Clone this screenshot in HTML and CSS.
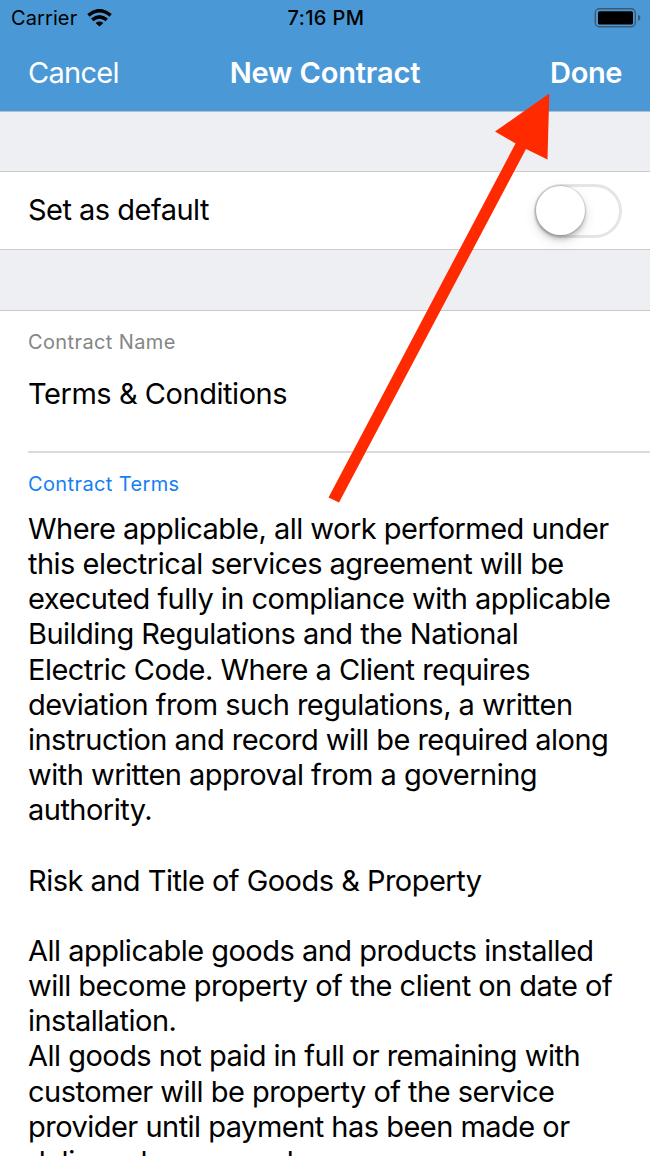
FILE: index.html
```html
<!DOCTYPE html>
<html lang="en">
<head>
    <meta charset="utf-8">
    <title>New Contract</title>
    <link rel="stylesheet" href="styles.css">
</head>
<body>
    <div class="screen">
        <header class="top">
            <div class="status-bar">
                <div class="carrier">
                    <span>Carrier</span>
                    <svg width="25" height="18" viewBox="0 0 25 18" fill="none" stroke="#000" stroke-width="3.6">
                        <path d="M1.4 6.4Q12.5-3 23.6 6.4"/>
                        <path d="M5.2 10.9Q12.5 4.7 19.8 10.9"/>
                        <path d="M8.6 13.9Q12.5 11 16.4 13.9L12.5 17.6Z" fill="#000" stroke="none"/>
                    </svg>
                </div>
                <div class="time">7:16 PM</div>
                <svg class="battery" width="47" height="20" viewBox="0 0 47 20">
                    <rect x="1.3" y="0.8" width="40" height="18" rx="4" fill="none" stroke="#3f5a70" stroke-width="1.4"/>
                    <rect x="4" y="3.2" width="35" height="13.2" rx="1.5" fill="#000"/>
                    <path d="M44 6.5Q46.5 8 46.5 9.8Q46.5 11.6 44 13Z" fill="#3f5a70"/>
                </svg>
            </div>
            <nav class="nav-bar">
                <a class="cancel">Cancel</a>
                <h1>New Contract</h1>
                <a class="done">Done</a>
            </nav>
        </header>

        <div class="default-row">
            <span>Set as default</span>
            <div class="toggle"><div class="knob"></div></div>
        </div>

        <main class="form">
            <div class="field name-field">
                <label>Contract Name</label>
                <div class="value">Terms &amp; Conditions</div>
            </div>
            <div class="field terms-field">
                <label>Contract Terms</label>
                <div class="terms">Where applicable, all work performed under
this electrical services agreement will be
executed fully in compliance with applicable
Building Regulations and the National
Electric Code. Where a Client requires
deviation from such regulations, a written
instruction and record will be required along
with written approval from a governing
authority.

Risk and Title of Goods &amp; Property

All applicable goods and products installed
will become property of the client on date of
installation.
All goods not paid in full or remaining with
customer will be property of the service
provider until payment has been made or
delivery has ensued.</div>
            </div>
        </main>

        <svg class="arrow" width="650" height="520" viewBox="0 0 650 520" fill="#ff2a00">
            <path d="M549.3 93.5L547.5 159.5L526 149L339 502.5L328.5 497.5L515.5 143.5L495 131.5Z"/>
        </svg>
    </div>
</body>
</html>
```

FILE: styles.css
```css
body {
    margin: 0;
    background: #fff;
    font-family: Inter, "Liberation Sans", sans-serif;
    font-size: 29px;
    letter-spacing: -0.52px;
    color: #000;
}

.screen {
    position: relative;
    height: 1156px;
    overflow: hidden;
    background: #eeeff3;
}

.top {
    box-sizing: border-box;
    height: 112px;
    background: #4a99d6;
    border-bottom: 1px solid #b5bfc9;
}

.status-bar,
.nav-bar {
    display: grid;
    grid-template-columns: 1fr auto 1fr;
    align-items: center;
}

.status-bar {
    height: 36px;
    padding: 0 9px 0 11px;
    font-size: 20px;
}

.carrier {
    display: flex;
    align-items: center;
    gap: 10px;
    letter-spacing: 0.1px;
}

.time {
    font-weight: 500;
    letter-spacing: 0.4px;
}

.battery {
    justify-self: end;
}

.nav-bar {
    height: 73px;
    padding: 0 28px;
    color: #fff;
}

.cancel {
    letter-spacing: -0.7px;
}

.nav-bar h1 {
    margin: 0;
    font-size: 29px;
    font-weight: 600;
    letter-spacing: -0.15px;
}

.done {
    justify-self: end;
    font-weight: 600;
    letter-spacing: -0.4px;
}

.default-row {
    box-sizing: border-box;
    display: flex;
    align-items: center;
    justify-content: space-between;
    height: 79px;
    margin: 59px 0 60px;
    padding: 0 28px;
    background: #fff;
    border-top: 1px solid #cbcbce;
    border-bottom: 1px solid #cbcbce;
}

.default-row span {
    padding-bottom: 2px;
}

.toggle {
    box-sizing: border-box;
    width: 88px;
    height: 54px;
    border: 3px solid #e5e5e5;
    border-radius: 27px;
}

.knob {
    width: 49px;
    height: 49px;
    margin: -1px;
    border-radius: 50%;
    background: #fff;
    box-shadow: 0 0 1px 1px rgba(0,0,0,0.15), 0 4px 5px rgba(0,0,0,0.2), 0 5px 14px rgba(0,0,0,0.12);
}

.form {
    background: #fff;
    border-top: 1px solid #c9c9cc;
}

.field {
    margin-left: 28px;
}

.name-field {
    box-sizing: border-box;
    height: 142px;
    padding-top: 18px;
    border-bottom: 2px solid #dadadb;
}

label {
    display: block;
    font-size: 20px;
    line-height: 26px;
    letter-spacing: 0.38px;
    color: #858585;
}

.value {
    margin-top: 21px;
    line-height: 36px;
    letter-spacing: -0.45px;
}

.terms-field {
    padding-top: 18px;
}

.terms-field label {
    color: #1480f5;
}

.terms {
    margin-top: 14px;
    line-height: 35.15px;
    white-space: pre;
}

/* pointer drawn over the form */
.arrow {
    position: absolute;
    top: 0;
    left: 0;
}
```
